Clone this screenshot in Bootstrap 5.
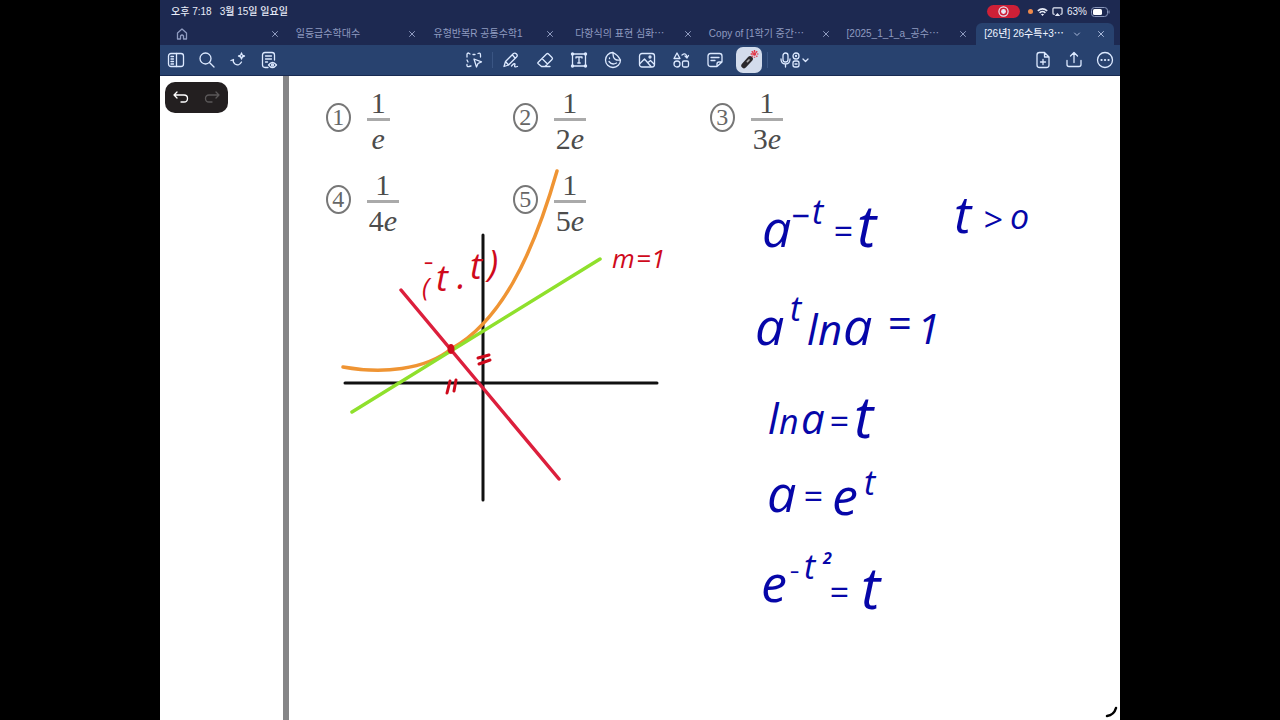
<!DOCTYPE html>
<html lang="ko">
<head>
<meta charset="utf-8">
<meta name="viewport" content="width=device-width, initial-scale=1">
<title>[26년] 26수특+3</title>
<link href="https://cdn.jsdelivr.net/npm/bootstrap@5.3.0/dist/css/bootstrap.min.css" rel="stylesheet">
<style>
body{background:#000;font-family:"Liberation Sans","Noto Sans CJK KR",sans-serif;font-size:10px;line-height:16px}
.tablet{width:75%;min-height:100vh;background:#fff}
.topbar{background:#1d2951;color:#e8ecf8}
.status{height:23px;padding:0 10px 0 11px;font-weight:500}
.rec{width:33px;height:13px;background:#ce2037}
.dot{width:5px;height:5px;background:#ef8a4b}
.tabs{display:grid;grid-template-columns:128fr repeat(6,138fr);padding-right:6px;height:22px}
.doc-tab{color:#8f9bc0;padding:0 9px 0 8px;min-width:0}
.doc-tab a{color:inherit;min-width:0}
.doc-tab.on{background:#28426f;color:#eef3ff;border-radius:6px 6px 0 0;font-weight:500}
.doc-tab.on button{color:#a9b9da}
.doc-tab button,.tools button,.undo button{border:0;background:none;padding:0;color:inherit;display:flex;align-items:center;justify-content:center}
.tools{display:grid;grid-template-columns:1fr auto 1fr;background:#28426f;color:#dce9ff;height:31px;border-bottom:1px solid #182a52}
.tools button{width:34px;height:30px}
.tools .side button{width:31px}
.tools .mic{width:48px}
.tools .on span{display:flex;width:26px;height:26px;border-radius:7px;background:#d3dcec;align-items:center;justify-content:center}
.rule-v{width:1px;height:16px;margin:0 1px;background:#3a5583}
svg.ic{width:18px;height:18px;fill:none;stroke:currentColor;stroke-width:1.3;stroke-linecap:round;stroke-linejoin:round;flex:none}
svg.xs{width:8px;height:8px;stroke-width:1}
svg.home{width:12px;height:12px}
svg.target{width:11px;height:11px}
svg.wide{width:36px}
.gutter{width:13.4%;border-right:6px solid #858587;padding:6px 5px}
.undo{width:63px;height:31px;border-radius:10px;background:#231f20;color:#fff}
.choices{display:grid;grid-template-columns:187fr 197fr 211fr;width:632px;max-width:100%;padding:11px 0 0 37px;margin:0;list-style:none;row-gap:14px;font-family:"Liberation Serif",serif;color:#4c4c4c}
.num{width:25px;height:29px;border:2px solid #777;border-radius:50%;font-size:24px;line-height:25px;text-align:center;color:#666;margin-bottom:8px}
.frac{font-size:30px;line-height:32px;min-width:23px;text-align:center}
.frac span{display:block}
.frac .top{border-bottom:3px solid #aaa;line-height:31px}
.frac .bot{padding:2px 2px 0 2px}
.ink{width:100%;height:100%;left:0;top:0;pointer-events:none;fill:none;stroke-linecap:round;stroke-linejoin:round}
.ink text{font-family:"Open Sans",sans-serif;font-style:italic;font-size:52px;fill:#0606a8}
.ink .md{font-size:42px}
.ink .sm{font-size:34px}
.ink .tall{font-size:58px}
.ink .tiny{font-size:16px;font-weight:700}
.ink .red{fill:#cf0a1c;font-size:36px}
.ink .red .sm{font-size:26px}
</style>
</head>
<body>
<div class="tablet mx-auto d-flex flex-column overflow-hidden">
<header>
 <div class="topbar">
  <div class="status d-flex align-items-center justify-content-between">
   <div class="d-flex gap-2"><span>오후 7:18</span><span>3월 15일 일요일</span></div>
   <div class="d-flex align-items-center gap-1">
    <span class="rec rounded-pill d-flex align-items-center justify-content-center"><svg class="ic target" viewBox="0 0 12 12"><circle cx="6" cy="6" r="5"/><circle cx="6" cy="6" r="2" fill="currentColor"/></svg></span>
    <span class="dot rounded-circle ms-1"></span>
    <svg width="11" height="10" viewBox="0 0 14 11" fill="none" stroke="currentColor" stroke-width="2"><path d="M1 4Q7-1 13 4M3.3 6.5Q7 3.3 10.700 6.500"/><path d="M5 8.500Q7 7 9 8.500L7 10.500Z" fill="currentColor" stroke="none"/></svg>
    <svg width="11" height="10" viewBox="0 0 12 11" fill="none" stroke="currentColor" stroke-width="1.300"><path d="M3 8H2Q1 8 1 7V2Q1 1 2 1H10Q11 1 11 2V7Q11 8 10 8H9"/><path d="M6 6.500L9 10H3Z" fill="currentColor" stroke="none"/></svg>
    <span>63%</span>
    <svg width="19" height="10" viewBox="0 0 19 10"><rect x=".5" y=".5" width="16" height="9" rx="3" fill="none" stroke="#8794b8"/><rect x="2" y="2" width="9" height="6" rx="1.500" fill="#fff"/><path d="M18 3.500V6.500" stroke="#8794b8"/></svg>
   </div>
  </div>
  <nav class="tabs" aria-label="문서">
   <div class="doc-tab d-flex align-items-center justify-content-between"><a href="#" aria-label="홈" class="ms-2 d-flex"><svg class="ic home" viewBox="0 0 12 12"><path d="M1.500 5L6 1L10.500 5V11H7.500V8Q6 6 4.500 8V11H1.500Z"/></svg></a><button aria-label="닫기"><svg class="ic xs" viewBox="0 0 8 8"><path d="M1.500 1.500L6.500 6.500M6.500 1.500L1.500 6.500"/></svg></button></div>
   <div class="doc-tab d-flex align-items-center justify-content-between"><a href="#" class="text-decoration-none text-nowrap">일등급수학대수</a><button aria-label="닫기"><svg class="ic xs" viewBox="0 0 8 8"><path d="M1.500 1.500L6.500 6.500M6.500 1.500L1.500 6.500"/></svg></button></div>
   <div class="doc-tab d-flex align-items-center justify-content-between"><a href="#" class="text-decoration-none text-nowrap">유형반복R 공통수학1</a><button aria-label="닫기"><svg class="ic xs" viewBox="0 0 8 8"><path d="M1.500 1.500L6.500 6.500M6.500 1.500L1.500 6.500"/></svg></button></div>
   <div class="doc-tab d-flex align-items-center justify-content-between"><a href="#" class="text-decoration-none text-nowrap ms-1">다항식의 표현 심화⋯</a><button aria-label="닫기"><svg class="ic xs" viewBox="0 0 8 8"><path d="M1.500 1.500L6.500 6.500M6.500 1.500L1.500 6.500"/></svg></button></div>
   <div class="doc-tab d-flex align-items-center justify-content-between"><a href="#" class="text-decoration-none text-nowrap">Copy of [1학기 중간⋯</a><button aria-label="닫기"><svg class="ic xs" viewBox="0 0 8 8"><path d="M1.500 1.500L6.500 6.500M6.500 1.500L1.500 6.500"/></svg></button></div>
   <div class="doc-tab d-flex align-items-center justify-content-between"><a href="#" class="text-decoration-none text-nowrap">[2025_1_1_a_공수⋯</a><button aria-label="닫기"><svg class="ic xs" viewBox="0 0 8 8"><path d="M1.500 1.500L6.500 6.500M6.500 1.500L1.500 6.500"/></svg></button></div>
   <div class="doc-tab on d-flex align-items-center"><a href="#" class="text-decoration-none text-nowrap me-auto">[26년] 26수특+3⋯</a><button class="me-3" aria-label="메뉴"><svg class="ic xs" viewBox="0 0 8 8"><path d="M1.500 3L4 5.500L6.500 3"/></svg></button><button aria-label="닫기"><svg class="ic xs" viewBox="0 0 8 8"><path d="M1.500 1.500L6.500 6.500M6.500 1.500L1.500 6.500"/></svg></button></div>
  </nav>
 </div>
 <div class="tools">
  <div class="side d-flex">
   <button aria-label="사이드바"><svg class="ic" viewBox="0 0 18 18"><rect x="1.500" y="2.500" width="15" height="13" rx="2.500"/><path d="M9.500 2.500V15.500M4 5.500H6.500M4 8H6.500M4 10.500H6.500M4 13H6.500"/></svg></button>
   <button aria-label="검색"><svg class="ic" viewBox="0 0 18 18"><circle cx="7.500" cy="7.500" r="5.500"/><path d="M11.700 11.700L16 16"/></svg></button>
   <button aria-label="AI"><svg class="ic" viewBox="0 0 18 18"><path d="M2 9.500L4.500 8.500Q3.500 11 6 13Q10 15.500 12.500 11M12.500 2Q12.800 4.700 15.500 5Q12.800 5.300 12.500 8Q12.200 5.300 9.500 5Q12.200 4.700 12.500 2Z"/></svg></button>
   <button aria-label="문서 보기"><svg class="ic" viewBox="0 0 18 18"><path d="M8 16.500H5Q2.500 16.500 2.500 14V4Q2.500 1.500 5 1.500H12Q14.500 1.500 14.500 4V9M5.500 5H11.500M5.500 8H11.500M5.500 11H7.500M8.500 14Q12.500 9 16.500 14Q12.500 19 8.500 14Z"/><circle cx="12.500" cy="14" r="1"/></svg></button>
  </div>
  <div class="d-flex align-items-center">
   <button aria-label="올가미"><svg class="ic" viewBox="0 0 18 18"><path d="M2 6V3.500Q2 2 3.500 2L5 3M8 3.500H10M13 2.500Q15.500 1.500 15.500 4V6M2 9L3 11M2 13.500Q1.500 16 4 15.500L6 15M9 8L16.500 10.800L13 12.500L11.500 16Z"/></svg></button>
   <span class="rule-v"></span>
   <button aria-label="펜"><svg class="ic" viewBox="0 0 18 18"><path d="M2 15.500L3.500 10.500L11.500 2.500Q13 1.500 14.500 3Q16 4.500 14.500 6L6.500 14ZM3.500 10.500L6.500 14M10.500 4L13 7M9.500 15Q13 11 13 13.500Q11.500 17 15.500 15.500"/></svg></button>
   <button aria-label="지우개"><svg class="ic" viewBox="0 0 18 18"><path d="M2 11.500L10.500 3Q11.500 2 12.500 3L16 6.500Q17 7.500 16 8.500L9 15.500H5.500L2 12.500Q1.500 12 2 11.500ZM6 7.500L11.500 13M5.500 15.500H14"/></svg></button>
   <button aria-label="텍스트"><svg class="ic" viewBox="0 0 18 18"><rect x="2.500" y="3" width="13" height="12"/><path d="M6 7V6H12V7M9 6V12M7.800 12H10.200"/><g fill="currentColor" stroke="none"><circle cx="2.500" cy="3" r="1.700"/><circle cx="15.500" cy="3" r="1.700"/><circle cx="2.500" cy="15" r="1.700"/><circle cx="15.500" cy="15" r="1.700"/></g></svg></button>
   <button aria-label="스티커"><svg class="ic" viewBox="0 0 18 18"><path d="M9 1.500A7.500 7.500 0 1 0 16.500 9Q11 10 9.500 6Q9 4 9 1.500ZM9 1.500Q14 4 16.500 9M5 10.500Q8 14.500 12.500 12M5.500 7V7.500"/></svg></button>
   <button aria-label="이미지"><svg class="ic" viewBox="0 0 18 18"><rect x="1.500" y="2.500" width="15" height="13.500" rx="2.500"/><path d="M2 12.500L6.500 8L13 15.500M10 11.500L12.500 9.500L16 13"/><circle cx="12" cy="6" r="1"/></svg></button>
   <button aria-label="도형"><svg class="ic" viewBox="0 0 18 18"><path d="M5 2L8 7.500H2ZM10 4Q14 1 15 6M13 5L15 7L16.500 4.500"/><circle cx="5" cy="13" r="3"/><rect x="10.500" y="10" width="6" height="6" rx="1.500"/></svg></button>
   <button aria-label="메모"><svg class="ic" viewBox="0 0 18 18"><path d="M4.500 2.500H13.500Q16 2.500 16 5V11L11 15.500H4.500Q2 15.500 2 13V5Q2 2.500 4.500 2.500ZM16 11H13Q11 11 11 13V15.500M5 6.500H13M5 9.500H9"/></svg></button>
   <button class="on" aria-label="레이저"><span><svg width="22" height="22" viewBox="0 0 20 20"><path d="M5.500 15L11 9" stroke="#2b292d" stroke-width="5" stroke-linecap="round"/><path d="M8.500 11.500L10 10" stroke="#aaa" stroke-width="1.500" stroke-linecap="round"/><path d="M15 1V8M11.500 4.500H18.500M12.500 2L17.500 7M17.500 2L12.500 7" stroke="#e23848" stroke-width="1.300" stroke-dasharray="2 1"/><circle cx="15" cy="4.500" r="1.500" fill="#e23848"/></svg></span></button>
   <span class="rule-v me-1"></span>
   <button class="mic" aria-label="녹음"><svg class="ic wide" viewBox="0 0 36 18"><rect x="5" y="2" width="5" height="9" rx="2.500"/><path d="M3 8Q3 13 7.500 13Q12 13 12 8M7.500 13V16M25 8L27.500 10.500L30 8"/><circle cx="18" cy="5" r="3"/><circle cx="18" cy="5" r=".5"/><rect x="15" y="10" width="6" height="6" rx="2"/><path d="M17 13H19"/></svg></button>
   <span class="ms-1"></span>
  </div>
  <div class="side d-flex justify-content-end">
   <button aria-label="페이지 추가"><svg class="ic" viewBox="0 0 18 18"><path d="M10.500 1.500H5.500Q3 1.500 3 4V14Q3 16.500 5.500 16.500H12.500Q15 16.500 15 14V6ZM10.500 1.500V6H15M9 8.500V13.500M6.500 11H11.500"/></svg></button>
   <button aria-label="공유"><svg class="ic" viewBox="0 0 18 18"><path d="M2 9.500V13.500Q2 15.500 4 15.500H14Q16 15.500 16 13.500V9.500M9 11.500V2M5.500 5L9 1.500L12.500 5"/></svg></button>
   <button aria-label="더 보기"><svg class="ic" viewBox="0 0 18 18"><circle cx="9" cy="9" r="7.500"/><path d="M5.500 9H5.600M9 9H9.100M12.500 9H12.600" stroke-width="2.200"/></svg></button>
  </div>
 </div>
</header>
<main class="flex-grow-1 d-flex position-relative">
 <aside class="gutter flex-shrink-0"><div class="undo d-flex justify-content-around align-items-center"><button aria-label="실행 취소"><svg class="ic" viewBox="0 0 18 18"><path d="M5 3L2 6L5 9M2 6H12Q15.500 6 15.500 9.500Q15.500 13 12 13H9"/></svg></button><button aria-label="다시 실행" class="opacity-25 text-white" disabled><svg class="ic" viewBox="0 0 18 18"><path d="M13 3L16 6L13 9M16 6H6Q2.500 6 2.500 9.500Q2.500 13 6 13H9"/></svg></button></div></aside>
 <section class="flex-grow-1">
  <ol class="choices">
   <li class="d-flex align-items-center gap-3"><span class="num">1</span><span class="frac"><span class="top">1</span><span class="bot"><i>e</i></span></span></li>
   <li class="d-flex align-items-center gap-3"><span class="num">2</span><span class="frac"><span class="top">1</span><span class="bot">2<i>e</i></span></span></li>
   <li class="d-flex align-items-center gap-3"><span class="num">3</span><span class="frac"><span class="top">1</span><span class="bot">3<i>e</i></span></span></li>
   <li class="d-flex align-items-center gap-3"><span class="num">4</span><span class="frac"><span class="top">1</span><span class="bot">4<i>e</i></span></span></li>
   <li class="d-flex align-items-center gap-3"><span class="num">5</span><span class="frac"><span class="top">1</span><span class="bot">5<i>e</i></span></span></li>
  </ol>
 </section>
 <svg class="ink position-absolute" viewBox="160 76 960 644" preserveAspectRatio="xMinYMin meet">
  <path d="M345 383H657M483 235V500" stroke="#111" stroke-width="3"/>
  <path d="M343 367C382 374 425 370 451 349C500 322 532 258 557 171" stroke="#ef9433" stroke-width="3.500"/>
  <path d="M352 412L600 259" stroke="#8fe02c" stroke-width="3.500"/>
  <path d="M401 290L559 479" stroke="#dc1f3c" stroke-width="3.500"/>
  <path d="M478 358L489 355M479 364L490 360M450 381L447 393M456 380L454 391" stroke="#cf0a1c" stroke-width="3"/>
  <ellipse cx="451" cy="349" rx="3.500" ry="5" fill="#cf0a1c"/>
  <path d="M1107 716Q1114 715 1116 708" stroke="#000" stroke-width="2.500"/>
  <text class="red"><tspan class="sm" x="422" y="296">(</tspan><tspan class="tiny" x="424" y="269">−</tspan><tspan x="436" y="291">t</tspan><tspan x="457" y="289">.</tspan><tspan x="470" y="279">t</tspan><tspan x="488" y="276">)</tspan></text>
  <text class="red"><tspan class="sm" x="612" y="268">m</tspan><tspan class="sm" x="636" y="268">=</tspan><tspan class="sm" x="651" y="268">1</tspan></text>
  <text><tspan x="762" y="247">a</tspan><tspan class="sm" x="791" y="228">−</tspan><tspan class="sm" x="812" y="224">t</tspan><tspan class="sm" x="833" y="244">=</tspan><tspan class="tall" x="857" y="247">t</tspan></text>
  <text><tspan x="954" y="233">t</tspan><tspan class="sm" x="983" y="232">&gt;</tspan><tspan class="sm" x="1010" y="229">o</tspan></text>
  <text><tspan x="755" y="345">a</tspan><tspan class="sm" x="790" y="321">t</tspan><tspan class="md" x="807" y="345">l</tspan><tspan class="md" x="818" y="345">n</tspan><tspan x="843" y="345">a</tspan><tspan class="md" x="887" y="338">=</tspan><tspan class="md" x="917" y="344">1</tspan></text>
  <text><tspan class="md" x="768" y="434">l</tspan><tspan class="sm" x="779" y="434">n</tspan><tspan class="md" x="801" y="434">a</tspan><tspan class="sm" x="829" y="434">=</tspan><tspan class="tall" x="854" y="438">t</tspan></text>
  <text><tspan x="767" y="512">a</tspan><tspan class="sm" x="803" y="509">=</tspan><tspan x="832" y="515">e</tspan><tspan class="sm" x="864" y="495">t</tspan></text>
  <text><tspan x="761" y="602">e</tspan><tspan class="tiny" x="790" y="578">−</tspan><tspan class="sm" x="804" y="579">t</tspan><tspan class="tiny" x="823" y="564">2</tspan><tspan class="sm" x="829" y="605">=</tspan><tspan class="tall" x="861" y="609">t</tspan></text>
 </svg>
</main>
</div>
<script src="https://cdn.jsdelivr.net/npm/bootstrap@5.3.0/dist/js/bootstrap.bundle.min.js"></script>
</body>
</html>
